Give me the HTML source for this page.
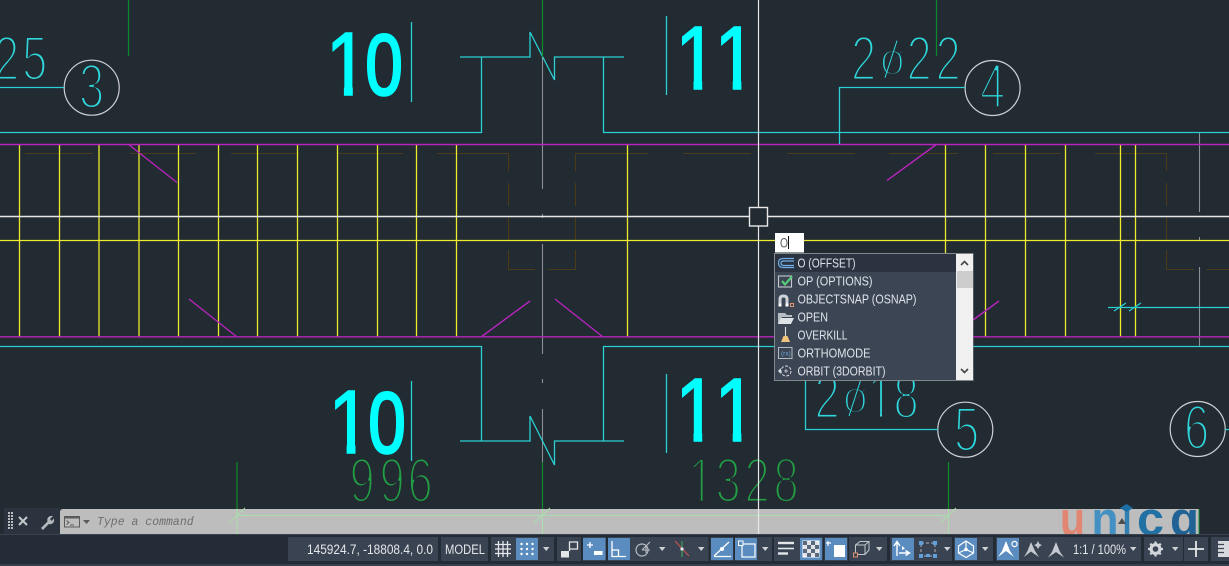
<!DOCTYPE html>
<html><head><meta charset="utf-8"><style>
html,body{margin:0;padding:0;background:#222a32;width:1229px;height:566px;overflow:hidden}
svg{display:block;position:absolute;left:0;top:0}
.t{font-family:"Liberation Sans",sans-serif;stroke:#222a32;stroke-width:3.1px;font-size:63px}
.o{font-size:45px;stroke-width:2.7px}
.c{fill:#2fd8dc}
.g{fill:#22a044}
.b{font-family:"Liberation Sans",sans-serif;fill:#00ffff;stroke:#00ffff;stroke-width:1.5px;font-size:90px}
.z{font-size:86px;stroke-width:2.6px}
.m{font-family:"Liberation Sans",sans-serif;font-size:13px;fill:#dfe4ea}
.s{font-family:"Liberation Sans",sans-serif;font-size:13.5px;fill:#e4e7ea}
.bl{fill:#5a8cc0}.p{fill:#3a4351}.ic{fill:#d9dde1}.tr{fill:#cdd1d6}
.st{fill:none;stroke:#e4e7ea;stroke-width:1.3}
</style></head><body>
<svg width="1229" height="566" viewBox="0 0 1229 566" xmlns="http://www.w3.org/2000/svg">
<rect width="1229" height="566" fill="#222a32"/>
<!-- thin CAD text -->
<g class="t c">
<text transform="matrix(.72 0 0 1 -6 80)" x="0 39" y="0">25</text>
<text transform="matrix(.72 0 0 1 79 108)">3</text>
<text transform="matrix(.72 0 0 1 980 108)">4</text>
<text transform="matrix(.72 0 0 1 954 451)">5</text>
<text transform="matrix(.72 0 0 1 1184 449)">6</text>
<text transform="matrix(.72 0 0 1 851 80)">2</text>
<text class="o" transform="matrix(1 0 0 1 878.5 74.5)">ø</text>
<text transform="matrix(.72 0 0 1 906.5 80)">2</text>
<text transform="matrix(.72 0 0 1 935.5 80)">2</text>
<text transform="matrix(.72 0 0 1 814.5 418)">2</text>
<text class="o" transform="matrix(1 0 0 1 841.5 412.5)">ø</text>
<text transform="matrix(.72 0 0 1 867.6 418)">1</text>
<text transform="matrix(.72 0 0 1 893.5 418)">8</text>
</g>
<g class="t g">
<text transform="matrix(.72 0 0 1 349.5 502)">9</text>
<text transform="matrix(.72 0 0 1 379.5 502)">9</text>
<text transform="matrix(.72 0 0 1 407.5 502)">6</text>
<text transform="matrix(.72 0 0 1 688.3 502)">1</text>
<text transform="matrix(.72 0 0 1 715.5 502)">3</text>
<text transform="matrix(.72 0 0 1 744.5 502)">2</text>
<text transform="matrix(.72 0 0 1 773.5 502)">8</text>
</g>
<!-- remove feet of thin 1s -->
<g fill="#222a32">
<rect x="869.6" y="412" width="10.4" height="8"/><rect x="882" y="412" width="11" height="8"/>
<rect x="690.3" y="496" width="10.4" height="8"/><rect x="702.7" y="496" width="11" height="8"/>
</g>
<!-- ø slashes -->
<path d="M885 77.7L897 40.7M849 416L861 379" stroke="#2fd8dc" stroke-width="1" fill="none"/>
<!-- bold section numbers -->
<g class="b">
<text transform="matrix(.85 0 0 1 325.7 95)">1</text>
<text class="z" transform="matrix(.78 0 0 1 365.4 94.5)">0</text>
<text transform="matrix(.85 0 0 1 328.4 453)">1</text>
<text class="z" transform="matrix(.78 0 0 1 368.4 452.5)">0</text>
<text transform="matrix(.85 0 0 1 675.2 89)">1</text>
<text transform="matrix(.85 0 0 1 714.4 89)">1</text>
<text transform="matrix(.85 0 0 1 675.2 441)">1</text>
<text transform="matrix(.85 0 0 1 714.4 441)">1</text>
</g>
<!-- remove feet of bold 1s -->
<g fill="#222a32">
<rect x="329.4" y="87.4" width="14.5" height="10"/><rect x="352.8" y="87.4" width="13" height="10"/>
<rect x="332.1" y="445.4" width="14.5" height="10"/><rect x="355.5" y="445.4" width="13" height="10"/>
<rect x="678.9" y="81.4" width="14.6" height="10"/><rect x="702.2" y="81.4" width="18.8" height="10"/><rect x="741.4" y="81.4" width="18.8" height="10"/><rect x="718.1" y="81.4" width="14.6" height="10"/>
<rect x="678.9" y="433.4" width="14.6" height="10"/><rect x="702.2" y="433.4" width="18.8" height="10"/><rect x="741.4" y="433.4" width="18.8" height="10"/><rect x="718.1" y="433.4" width="14.6" height="10"/>
</g>
<!-- brown hidden lines -->
<g stroke="#4a3c18" stroke-width="1.1" fill="none">
<path d="M25 153.5H93M130 153.5H196M231 153.5H299M338 153.5H403M437 153.5H508.5V171M508.5 183V206M508.5 217V240M508.5 250V269.5H535M548 269.5H575.5V250M575.5 240V217M575.5 206V183M575.5 171V153.5H648M683 153.5H751M787 153.5H855M889 153.5H958M993 153.5H1061M1095 153.5H1166.5V171M1166.5 183V206M1166.5 217V240M1166.5 250V269.5H1194M1206 269.5H1229"/>
</g>
<!-- gray -->
<g stroke="#8c8f93" stroke-width="1.1" fill="none">
<path d="M542.5 57V189M542.5 214V218M542.5 244V354M542.5 379V383M542.5 409V462M1199.5 132V212M1199.5 237V240M1199.5 267V346"/>
</g>
<!-- yellow -->
<g stroke="#eeea2e" stroke-width="1.3" fill="none">
<path d="M19.5 144V337M59.5 144V337M99 144V337M139 144V337M178.5 144V337M218.5 144V337M257.5 144V337M297.5 144V337M337.5 144V337M377.5 144V337M416.5 144V337M456.5 144V337M627.5 144V337M945.5 144V337M985.5 144V337M1025.5 144V337M1065.5 144V337M1120.5 144V337M1135.5 144V337"/>
<path d="M0 240.5H1229"/>
</g>
<!-- magenta -->
<g stroke="#b624bc" stroke-width="1.4" fill="none">
<path d="M0 144.5H1229M0 336.8H1229"/>
<path d="M128 144L177 182.5M887 180.5L937 144M189 299L237 337M481 337L530 301M555 299L603 337M973 320L999 301"/>
</g>
<!-- white crosshair + circles -->
<g stroke="#e8e8e8" fill="none">
<path d="M0 216.5H749M768 216.5H1229" stroke-width="1.5"/>
<circle cx="91.7" cy="87.7" r="27.5" stroke="#cfd2d4" stroke-width="1.2"/>
<circle cx="992.6" cy="88" r="27.5" stroke="#cfd2d4" stroke-width="1.2"/>
<circle cx="965.3" cy="429.7" r="27.5" stroke="#cfd2d4" stroke-width="1.2"/>
<circle cx="1197.7" cy="429" r="27.5" stroke="#cfd2d4" stroke-width="1.2"/>
</g>
<!-- cyan -->
<g stroke="#2ad0d4" stroke-width="1.3" fill="none">
<path d="M0 132.5H481.5V57M460 57H530V32L554.5 80V57H624M603.5 57V132.5H1229"/>
<path d="M0 346.5H481.5V441M460 441H530V416L554.5 465V441H624M603.5 441V346.5H1229"/>
<path d="M411.5 22V102M411.5 381V461M666.5 16V95M666.5 374V453"/>
<path d="M0 87.5H64M839.5 144V87.5H965M805.5 380V429.5H938M1225 429.5H1229M1108 307.5H1229"/>
<path d="M1114 311L1126 303M1129 311L1141 303"/>
</g>
<!-- green -->
<g stroke="#0d8a2c" stroke-width="1.2" fill="none">
<path d="M128.5 0V56M542.5 0V57M936.5 0V56M237 462V509M542.5 462V509M948.5 462V509"/>
</g>
<!-- command bar -->
<rect x="4" y="508" width="56" height="26" fill="#2b333f"/>
<path d="M60 512q0-3 3-3H1199V534H60Z" fill="#bdbdbd"/>
<!-- dimension on bar -->
<g stroke="#a9deab" stroke-width="1" fill="none">
<path d="M237 515.5H948.5M237 509V534M542.5 509V534M948.5 509V534M229 523L245 508M534 523L550 508M940 523L956 508"/>
</g>
<path d="M758.5 0V207M758.5 226V535" stroke="#e8e8e8" stroke-width="1.2"/>
<rect x="749.5" y="207.5" width="18" height="18.5" fill="#222a32" stroke="#e8e8e8" stroke-width="1.4"/>
<!-- unica logo -->
<g font-family="'Liberation Sans',sans-serif" font-weight="700" font-size="47" opacity=".95">
<text x="1060" y="535" fill="#e2846f" textLength="25" lengthAdjust="spacingAndGlyphs">u</text>
<text x="1091.5" y="535" fill="#3d8ec4" textLength="27" lengthAdjust="spacingAndGlyphs">n</text>
<text x="1122.5" y="535" fill="#2b7db3" textLength="9" lengthAdjust="spacingAndGlyphs">ı</text>
<text x="1137" y="535" fill="#1a6da3" textLength="27" lengthAdjust="spacingAndGlyphs">c</text>
<text x="1170" y="535" fill="#195f92" textLength="29" lengthAdjust="spacingAndGlyphs">ɑ</text>
</g>
<path d="M1120 508L1126.5 504L1133 508L1126.5 512Z" fill="#1b6ea5"/>
<path d="M1199 509V534" stroke="#16903a" stroke-width="1"/>
<path d="M1118 524L1122 518L1126 524Z" fill="#4d4d4d"/>
<!-- left command icons -->
<g fill="#b9bdc2">
<path d="M8 512h2v2h-2zM11 512h2v2h-2zM8 515h2v2h-2zM11 515h2v2h-2zM8 518h2v2h-2zM11 518h2v2h-2zM8 521h2v2h-2zM11 521h2v2h-2zM8 524h2v2h-2zM11 524h2v2h-2zM8 527h2v2h-2zM11 527h2v2h-2z"/>
</g>
<path d="M19 517L27 525M27 517L19 525" stroke="#c4c8cc" stroke-width="2" fill="none"/>
<path d="M41 528L47.5 521.5C46.5 518 49 515.5 53 516L50 519L51.5 521L54 518.5C54.8 522.5 52 525 48.8 524L43 530Z" fill="#b5b9bd"/>
<rect x="64.5" y="516.5" width="15" height="10.5" fill="none" stroke="#5a5a5a"/>
<path d="M64 516h16v2.5H64z" fill="#5a5a5a"/>
<path d="M66.5 520.5L69 522.5L66.5 524.5M70 525H74" stroke="#5a5a5a" fill="none"/>
<path d="M83 520H90L86.5 524Z" fill="#5a5a5a"/>
<text x="97" y="525" font-family="'Liberation Mono',monospace" font-style="italic" font-size="11.5" fill="#6e6e6e">Type a command</text>
<!-- status bar -->
<rect x="0" y="535" width="1229" height="31" fill="#222b36"/>
<rect x="0" y="534" width="1229" height="1" fill="#3b4350"/>
<rect x="0" y="564" width="1229" height="2" fill="#353e4b"/>
<g class="p">
<rect x="288" y="537" width="150" height="24"/>
<rect x="441" y="537" width="47" height="24"/>
<rect x="491" y="537" width="63" height="24"/>
<rect x="557" y="537" width="24" height="24"/>
<rect x="583" y="537" width="189" height="24"/>
<rect x="774" y="537" width="113" height="24"/>
<rect x="890" y="537" width="62" height="24"/>
<rect x="954" y="537" width="39" height="24"/>
<rect x="996" y="537" width="145" height="24"/>
<rect x="1144" y="537" width="39" height="24"/>
<rect x="1184" y="537" width="24" height="24"/>
<rect x="1211" y="537" width="18" height="24"/>
</g>
<g fill="#222b36"><rect x="606" y="537" width="2" height="24"/><rect x="733.5" y="537" width="1.5" height="24"/><rect x="708.5" y="537" width="2" height="24"/><rect x="823" y="537" width="1.5" height="24"/><rect x="848" y="537" width="1" height="24"/></g>
<g class="bl">
<rect x="516" y="538" width="22" height="22"/>
<rect x="583" y="538" width="22.5" height="22"/>
<rect x="608" y="538" width="22" height="22"/>
<rect x="711" y="538" width="22" height="22"/>
<rect x="735" y="538" width="22" height="22"/>
<rect x="800" y="538" width="22" height="22"/>
<rect x="825" y="538" width="22" height="22"/>
<rect x="892" y="538" width="22" height="22"/>
<rect x="955" y="538" width="22" height="22"/>
<rect x="997" y="538" width="22" height="22"/>
</g>
<text class="s" x="307" y="554" textLength="126" lengthAdjust="spacingAndGlyphs">145924.7, -18808.4, 0.0</text>
<text class="s" x="445" y="554" textLength="40" lengthAdjust="spacingAndGlyphs">MODEL</text>
<!-- grid -->
<path class="st" d="M495 544.5H511M495 549H511M495 553.5H511M498.5 541V557M503 541V557M507.5 541V557" stroke-width="1"/>
<g fill="#fff"><circle cx="521.5" cy="544" r="1.2"/><circle cx="527" cy="544" r="1.2"/><circle cx="532.5" cy="544" r="1.2"/><circle cx="521.5" cy="549" r="1.2"/><circle cx="527" cy="549" r="1.2"/><circle cx="532.5" cy="549" r="1.2"/><circle cx="521.5" cy="554" r="1.2"/><circle cx="527" cy="554" r="1.2"/><circle cx="532.5" cy="554" r="1.2"/></g>
<g class="tr"><path d="M543 547H549.5L546.2 551Z"/><path d="M659 547H665.5L662.2 551Z"/><path d="M698 547H704.5L701.2 551Z"/><path d="M762 547H768.5L765.2 551Z"/><path d="M876 547H882.5L879.2 551Z"/><path d="M944 547H950.5L947.2 551Z"/><path d="M982 547H988.5L985.2 551Z"/><path d="M1130 547H1136.5L1133.2 551Z"/><path d="M1172 547H1178.5L1175.2 551Z"/></g>
<!-- snap -->
<rect x="561" y="551" width="8" height="6.5" fill="#e4e7ea"/>
<path class="st" d="M569.5 551V542H577.5V549H569.5"/>
<!-- infer -->
<path d="M587 545H593M590 542V548" stroke="#fff" stroke-width="1.3"/><rect x="594" y="551" width="8.5" height="4" fill="#fff"/>
<!-- ortho -->
<path d="M612 541V556.5H626M612 550H618.5V556" fill="none" stroke="#fff" stroke-width="1.3"/>
<!-- polar -->
<circle cx="642" cy="550" r="6" fill="none" stroke="#b9bec4" stroke-width="1.2"/><path d="M642 550L650 542M642 550H650M646 545V553" fill="none" stroke="#b9bec4" stroke-width="1.1"/>
<!-- osnap track -->
<path d="M682 541V557" stroke="#3ea85a" stroke-width="1.1"/><path d="M675 541L689 556" stroke="#c75353" stroke-width="1.1"/><circle cx="682" cy="549" r="1.6" fill="#e4e7ea"/>
<!-- dyn angle -->
<path d="M714 556L729 542M714 556.5H731" fill="none" stroke="#fff" stroke-width="1.3"/><circle cx="722" cy="549" r="2" fill="#fff"/>
<!-- osnap box -->
<rect x="742" y="544" width="13" height="13" fill="none" stroke="#fff" stroke-width="1.2"/><rect x="738.5" y="541" width="4.5" height="4.5" fill="#5a8cc0" stroke="#fff"/>
<!-- lineweight -->
<path d="M778 543H794" stroke="#e4e7ea" stroke-width="2.4"/><path d="M778 548.5H794" stroke="#e4e7ea" stroke-width="1.6"/><path d="M778 553.5H788" stroke="#e4e7ea" stroke-width="2.4"/>
<!-- transparency -->
<rect x="803" y="541" width="16" height="16" fill="#dfe3e7" stroke="#fff"/>
<path d="M803 541h4v4h-4zM811 541h4v4h-4zM807 545h4v4h-4zM815 545h4v4h-4zM803 549h4v4h-4zM811 549h4v4h-4zM807 553h4v4h-4zM815 553h4v4h-4z" fill="#5a6a7c"/>
<!-- selection -->
<rect x="834" y="545" width="11" height="12" fill="#fff"/><path d="M828 541V546M826 543H831" stroke="#fff" stroke-width="1.2"/>
<!-- annotate 3d cube -->
<path d="M855.5 552.5V545L860 541.5H869V550L865 554.5H858M855.5 545H865V554.5M865 545L869 541.5" fill="none" stroke="#c3c8cd" stroke-width="1"/><rect x="853.5" y="553" width="4" height="4" fill="none" stroke="#e0906e"/>
<!-- ucs -->
<path d="M897 556V543M894 546L897 541.5L900 546M899 553H909M905.5 550.5L909.5 553L905.5 555.5" fill="none" stroke="#fff" stroke-width="1.4"/><path d="M902 546L905 548.5L902 550Z" fill="#fff"/>
<!-- gizmo -->
<rect x="921" y="543" width="14" height="13" fill="none" stroke="#aeb4ba" stroke-dasharray="3 2"/><g fill="#5fa0dc"><rect x="919" y="541" width="4" height="4"/><rect x="933" y="541" width="4" height="4"/><rect x="919" y="554" width="4" height="4"/><rect x="933" y="554" width="4" height="4"/><rect x="926" y="554" width="4" height="3"/></g>
<!-- 3d -->
<path d="M966 541L973.5 546V553L966 557.5L958.5 553V546ZM966 549.5V541M966 549.5L958.5 553M966 549.5L973.5 553" fill="none" stroke="#fff" stroke-width="1.2"/><circle cx="966" cy="549.5" r="1.8" fill="#fff"/>
<!-- annotation icons -->
<path d="M1006 541L1010 551L1014 557L1008 552.5L1006 551L1004 552.5L998 557L1002 551Z" fill="#fff"/><circle cx="1014.5" cy="544" r="2.6" fill="none" stroke="#fff" stroke-width="1.2"/>
<path d="M1031 542L1035 551L1039 557L1033 553L1031 551.5L1029 553L1024 557L1027.5 551Z" fill="#c6cad0"/><path d="M1038 541L1039.5 544L1042 545L1039.5 546.5L1038 549L1036.5 546.5L1034 545L1036.5 544Z" fill="#c6cad0"/>
<path d="M1056 542L1060 552L1064 557.5L1058 553.5L1056 552L1054 553.5L1048 557.5L1052 552Z" fill="#c6cad0"/>
<text class="s" x="1073" y="554" textLength="53" lengthAdjust="spacingAndGlyphs">1:1 / 100%</text>
<!-- gear -->
<circle cx="1155.5" cy="549" r="4.4" fill="none" stroke="#d2d6da" stroke-width="3.2"/>
<path d="M1155.5 541.5V556.5M1148 549H1163M1150.2 543.7L1160.8 554.3M1160.8 543.7L1150.2 554.3" stroke="#d2d6da" stroke-width="2.2" stroke-dasharray="2.4 10.2 2.4 0"/>
<!-- plus -->
<path d="M1196 541V557M1188 549H1204" stroke="#e6e8ea" stroke-width="1.8"/>
<!-- last -->
<path d="M1218 541H1229V557H1218Z" fill="#d6d9dd"/><path d="M1218 544.5H1224M1218 548.5H1224M1218 552.5H1224" stroke="#3a4351" stroke-width="1.3"/>
<!-- input box -->
<rect x="775" y="233" width="29" height="19.5" fill="#fff"/>
<text x="780" y="247.5" font-family="'Liberation Sans',sans-serif" font-size="13.5" fill="#555" textLength="8" lengthAdjust="spacingAndGlyphs">O</text>
<path d="M788.5 236V249" stroke="#111" stroke-width="1"/>
<!-- popup -->
<rect x="774.5" y="253.5" width="198.5" height="127" fill="#3c4554" stroke="#84888d"/>
<rect x="775" y="254" width="181" height="18" fill="#2b3340"/>
<rect x="956" y="254" width="17" height="126" fill="#f0f0f0"/>
<rect x="957" y="271" width="16" height="17" fill="#cdcdcd"/>
<path d="M961 265L964.5 261.5L968 265M961 369L964.5 372.5L968 369" fill="none" stroke="#444" stroke-width="1.6"/>
<g class="m">
<text x="797.5" y="267.5" textLength="58" lengthAdjust="spacingAndGlyphs">O (OFFSET)</text>
<text x="797.5" y="285.5" textLength="75" lengthAdjust="spacingAndGlyphs">OP (OPTIONS)</text>
<text x="797.5" y="303.5" textLength="119" lengthAdjust="spacingAndGlyphs">OBJECTSNAP (OSNAP)</text>
<text x="797.5" y="321.5" textLength="30.5" lengthAdjust="spacingAndGlyphs">OPEN</text>
<text x="797.5" y="339.5" textLength="50" lengthAdjust="spacingAndGlyphs">OVERKILL</text>
<text x="797.5" y="357.5" textLength="73" lengthAdjust="spacingAndGlyphs">ORTHOMODE</text>
<text x="797.5" y="375.5" textLength="88" lengthAdjust="spacingAndGlyphs">ORBIT (3DORBIT)</text>
</g>
<!-- popup icons -->
<path d="M794 258.5H783Q778.5 258.5 778.5 263Q778.5 267.5 783 267.5H794M794 261H784Q781 261 781 263Q781 265.5 784 265.5H794" fill="none" stroke="#6fb0e8" stroke-width="1.2"/>
<rect x="778.5" y="276" width="13" height="11" fill="none" stroke="#c5cad0" stroke-width="1.1"/>
<path d="M782 281L785 284.5L792 276.5" fill="none" stroke="#58cc78" stroke-width="2.2"/>
<path d="M778.5 306V299Q778.5 294.5 783.5 294.5Q788.5 294.5 788.5 299V306H785.5V299Q785.5 297.5 783.5 297.5Q781.5 297.5 781.5 299V306Z" fill="#cfd3d8"/>
<rect x="778.5" y="303.5" width="3" height="3" fill="#fff"/><rect x="785.5" y="303.5" width="3" height="3" fill="#fff"/>
<rect x="790.5" y="303.5" width="3" height="3" fill="none" stroke="#e0956a"/>
<path d="M778 313H785L787 315H792V317H782L778 324Z" fill="#b8bdc3"/><path d="M781 318H794L791 324H778Z" fill="#dfe2e6"/>
<path d="M785.5 327V336" stroke="#d9dce0" stroke-width="1.1"/><path d="M783.5 336H787.5L790 342H781Z" fill="#efc27c"/>
<rect x="778.5" y="347.5" width="13.5" height="11" fill="none" stroke="#b5bbc2"/><text x="781" y="355.5" font-family="'Liberation Sans',sans-serif" font-size="6.5" fill="#6fa8dc">(rx)</text>
<circle cx="786" cy="371" r="5" fill="none" stroke="#d9dce0" stroke-dasharray="3 1.5"/><path d="M786 369V373M784 371H788M778.5 371L780.5 369V373Z" stroke="#d9dce0" fill="#d9dce0" stroke-width=".8"/>
</svg>
</body></html>
